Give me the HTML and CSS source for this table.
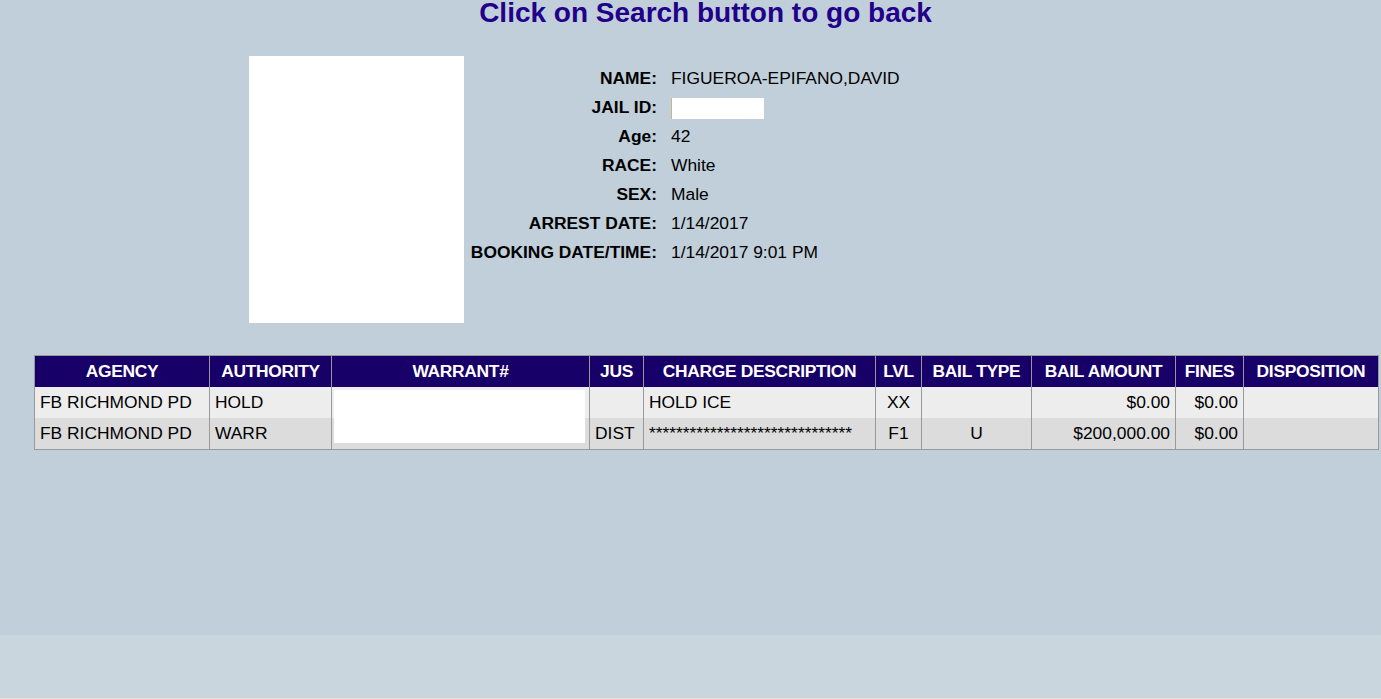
FILE: index.html
```html
<!DOCTYPE html>
<html>
<head>
<meta charset="utf-8">
<link rel="stylesheet" href="styles.css">
</head>
<body>
<div class="page">
  <main class="main">
    <h1 class="title">Click on Search button to go back</h1>
    <section class="profile">
      <div class="photo"></div>
      <div class="info">
        <div class="label">NAME:</div><div class="value">FIGUEROA-EPIFANO,DAVID</div>
        <div class="label">JAIL ID:</div><div class="value"><span class="redact-id"></span></div>
        <div class="label">Age:</div><div class="value">42</div>
        <div class="label">RACE:</div><div class="value">White</div>
        <div class="label">SEX:</div><div class="value">Male</div>
        <div class="label">ARREST DATE:</div><div class="value">1/14/2017</div>
        <div class="label">BOOKING DATE/TIME:</div><div class="value">1/14/2017 9:01 PM</div>
      </div>
    </section>
    <div class="charges-wrap">
      <table class="charges">
        <colgroup>
          <col class="c-agency"><col class="c-auth"><col class="c-warr"><col class="c-jus"><col class="c-desc"><col class="c-lvl"><col class="c-btype"><col class="c-bamt"><col class="c-fines"><col class="c-disp">
        </colgroup>
        <thead>
          <tr><th>AGENCY</th><th>AUTHORITY</th><th>WARRANT#</th><th>JUS</th><th>CHARGE DESCRIPTION</th><th>LVL</th><th>BAIL TYPE</th><th>BAIL AMOUNT</th><th>FINES</th><th>DISPOSITION</th></tr>
        </thead>
        <tbody>
          <tr class="odd"><td>FB RICHMOND PD</td><td>HOLD</td><td></td><td></td><td>HOLD ICE</td><td class="center">XX</td><td class="center"></td><td class="right">$0.00</td><td class="right">$0.00</td><td></td></tr>
          <tr class="even"><td>FB RICHMOND PD</td><td>WARR</td><td></td><td>DIST</td><td class="stars">******************************</td><td class="center">F1</td><td class="center">U</td><td class="right">$200,000.00</td><td class="right">$0.00</td><td></td></tr>
        </tbody>
      </table>
      <div class="redact-warrant"></div>
    </div>
  </main>
  <footer class="band"></footer>
</div>
</body>
</html>
```
FILE: styles.css
```css
html, body {
  margin: 0;
  padding: 0;
}
body {
  background: #c1cfda;
  font-family: "Liberation Sans", Arial, sans-serif;
  color: #000;
}
.page {
  height: 699px;
  display: flex;
  flex-direction: column;
}
.main {
  flex: 1;
}
.title {
  margin: 0;
  text-align: center;
  font-size: 28px;
  line-height: 25px;
  font-weight: bold;
  color: #22008a;
  padding-left: 30px;
}
.profile {
  display: flex;
  margin-top: 31px;
  padding-left: 249px;
  align-items: flex-start;
}
.photo {
  width: 215px;
  height: 267px;
  background: #fff;
}
.info {
  display: grid;
  grid-template-columns: 193px auto;
  grid-auto-rows: 29px;
  column-gap: 14px;
  margin-top: 8px;
  font-size: 17.4px;
  align-items: center;
}
.label {
  font-weight: bold;
  text-align: right;
}
.redact-id {
  display: block;
  width: 92px;
  height: 21px;
  background: #fff;
  border-left: 1px solid #c8b98a;
  margin-top: 1px;
}
.charges-wrap {
  position: relative;
  margin: 32px 0 0 34px;
  width: 1344px;
}
.charges {
  width: 1344px;
  border-collapse: collapse;
  table-layout: fixed;
  font-size: 17.4px;
  border: 1px solid #999;
}
.c-agency { width: 175px; }
.c-auth { width: 122px; }
.c-warr { width: 258px; }
.c-jus { width: 54px; }
.c-desc { width: 232px; }
.c-lvl { width: 46px; }
.c-btype { width: 110px; }
.c-bamt { width: 144px; }
.c-fines { width: 68px; }
.c-disp { width: 135px; }
.charges th {
  background: #170068;
  color: #fff;
  font-weight: bold;
  font-size: 17.4px;
  height: 31px;
  padding: 0 3px;
  border-left: 1px solid #999;
  white-space: nowrap;
  text-align: center;
  letter-spacing: -0.3px;
}
.charges td {
  height: 31px;
  padding: 0 5px;
  border-left: 1px solid #999;
  white-space: nowrap;
  overflow: hidden;
}
.charges tr.odd td { background: #ededed; }
.charges tr.even td { background: #dcdcdc; }
.charges td.center { text-align: center; }
.charges td.right { text-align: right; }
.redact-warrant {
  position: absolute;
  left: 300px;
  top: 35px;
  width: 251px;
  height: 53px;
  background: #fff;
}
.band {
  height: 63px;
  background: #c9d6de;
  border-bottom: 1px solid #e4e1da;
}
```
